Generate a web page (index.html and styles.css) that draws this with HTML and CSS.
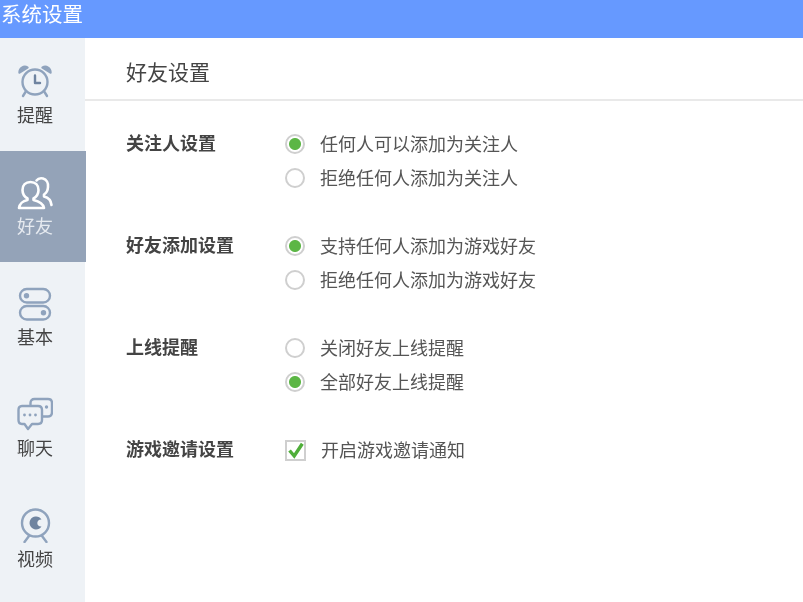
FILE: index.html
```html
<!DOCTYPE html>
<html lang="zh-CN">
<head>
<meta charset="utf-8">
<title>系统设置</title>
<link rel="stylesheet" href="styles.css">
</head>
<body>
<div class="app">
  <header class="titlebar">系统设置</header>
  <div class="main">
    <nav class="sidebar">
      <div class="nav-item">
        <svg class="nav-icon" viewBox="0 0 36 36" fill="none" stroke="#8fa3bd" stroke-width="2.4" stroke-linecap="round" stroke-linejoin="round">
          <circle cx="18" cy="19" r="12.5"/>
          <path d="M18 12.500V20H23" stroke="#6f84a0"/>
          <path d="M2.500 9.500C2.500 5.500 6.500 2.500 10.500 4.500Z" fill="#8fa3bd"/>
          <path d="M33.500 9.500C33.500 5.500 29.500 2.500 25.500 4.500Z" fill="#8fa3bd"/>
          <path d="M8.500 29l-2.500 4M27.500 29l2.500 4"/>
        </svg>
        <span>提醒</span>
      </div>
      <div class="nav-item active">
        <svg class="nav-icon" viewBox="0 0 36 36" fill="none" stroke="#fff" stroke-width="2.600" stroke-linecap="round" stroke-linejoin="round">
          <path d="M10.500 24.500C7 22.500 5.500 19.500 5.500 16C5.500 11 8.500 8 13.500 8C18.500 8 21.500 11 21.500 16C21.500 19.500 20 22.500 16.500 24.500V26C21 27 26 28.500 27 34H2C3 28.500 6 27 10.500 26Z"/>
          <path d="M19.500 6.500C21 4.500 23.500 4 26 4.500C29.500 5.500 31.500 9 31 13C30.800 16.500 29.500 19 27 20.500V22.500C31 23.500 34 26 34.500 31"/>
        </svg>
        <span>好友</span>
      </div>
      <div class="nav-item">
        <svg class="nav-icon" viewBox="0 0 36 36" fill="none" stroke="#8fa3bd" stroke-width="2.400">
          <rect x="3" y="4" width="30" height="13.500" rx="6.750"/>
          <rect x="3" y="21" width="30" height="13.500" rx="6.750"/>
          <circle cx="9.500" cy="10.700" r="2.700" fill="#8fa3bd" stroke="none"/>
          <circle cx="26.500" cy="27.700" r="2.700" fill="#8fa3bd" stroke="none"/>
        </svg>
        <span>基本</span>
      </div>
      <div class="nav-item">
        <svg class="nav-icon" viewBox="0 0 36 36" fill="none" stroke="#8fa3bd" stroke-width="2.400" stroke-linecap="round" stroke-linejoin="round">
          <path d="M5 10H21C23.500 10 25 11.500 25 14V24C25 26.500 23.500 28 21 28H15L11 33L7.500 28H5C2.500 28 1.500 26.500 1.500 24V14C1.500 11.500 2.500 10 5 10Z"/>
          <path d="M13.500 8.500V7C13.500 4.500 15 3 17.500 3H31C33.500 3 35 4.500 35 7V16C35 19 33.500 20.500 31 20.500H26"/>
          <circle cx="7.500" cy="19" r="1.400" fill="#8fa3bd" stroke="none"/>
          <circle cx="13" cy="19" r="1.400" fill="#8fa3bd" stroke="none"/>
          <circle cx="18.500" cy="19" r="1.400" fill="#8fa3bd" stroke="none"/>
          <circle cx="29.500" cy="11" r="1.700" fill="#8fa3bd" stroke="none"/>
        </svg>
        <span>聊天</span>
      </div>
      <div class="nav-item">
        <svg class="nav-icon" viewBox="0 0 36 36" fill="none" stroke="#8fa3bd" stroke-width="2.400" stroke-linecap="round">
          <circle cx="18.500" cy="16" r="13.500"/>
          <path d="M18.500 9.500A6.500 6.500 0 1 0 24.500 19.500C22 19.700 20.300 18.200 20.300 16C20.300 14 22 12.300 24.500 12.500A6.500 6.500 0 0 0 18.500 9.500Z" fill="#6f84a0" stroke="none"/>
          <path d="M12 29L7.500 35M25 29L29.500 35"/>
        </svg>
        <span>视频</span>
      </div>
    </nav>
    <section class="content">
      <h1 class="content-title">好友设置</h1>
      <div class="groups">
        <div class="group">
          <div class="group-label">关注人设置</div>
          <div class="options">
            <div class="option"><i class="radio checked"></i><span>任何人可以添加为关注人</span></div>
            <div class="option"><i class="radio"></i><span>拒绝任何人添加为关注人</span></div>
          </div>
        </div>
        <div class="group">
          <div class="group-label">好友添加设置</div>
          <div class="options">
            <div class="option"><i class="radio checked"></i><span>支持任何人添加为游戏好友</span></div>
            <div class="option"><i class="radio"></i><span>拒绝任何人添加为游戏好友</span></div>
          </div>
        </div>
        <div class="group">
          <div class="group-label">上线提醒</div>
          <div class="options">
            <div class="option"><i class="radio"></i><span>关闭好友上线提醒</span></div>
            <div class="option"><i class="radio checked"></i><span>全部好友上线提醒</span></div>
          </div>
        </div>
        <div class="group">
          <div class="group-label">游戏邀请设置</div>
          <div class="options">
            <div class="option">
              <i class="checkbox"><svg viewBox="0 0 20 20" fill="none" stroke="#4fae3a" stroke-width="4"><path d="M3 10L8.500 16.500L18 2"/></svg></i>
              <span>开启游戏邀请通知</span>
            </div>
          </div>
        </div>
      </div>
    </section>
  </div>
</div>
</body>
</html>
```
FILE: styles.css
```css
* { box-sizing: border-box; }
html, body { margin: 0; padding: 0; }
body {
  width: 803px;
  height: 602px;
  overflow: hidden;
  background: #fff;
  font-family: "Noto Sans CJK SC", "Liberation Sans", sans-serif;
  color: #555;
}
.app {
  height: 602px;
  display: flex;
  flex-direction: column;
  filter: blur(0.5px);
}
.titlebar {
  height: 38px;
  flex: none;
  padding-left: 1px;
  background: #6699ff;
  color: #fff;
  font-size: 20.500px;
  line-height: 27px;
}
.main { flex: 1; display: flex; min-height: 0; }
.sidebar {
  width: 85px;
  flex: none;
  padding-top: 2px;
  background: #eef2f6;
}
.nav-item {
  width: 85px;
  height: 111px;
  display: flex;
  flex-direction: column;
  align-items: center;
  padding: 23px 15px 0 0;
  font-size: 18px;
  line-height: 24px;
  color: #444;
}
.nav-item.active {
  width: 86px;
  padding-right: 16px;
  background: #94a3b8;
  color: #e6eaf0;
}
.nav-icon { width: 36px; height: 36px; display: block; margin-bottom: 3px; flex: none; }
.content { flex: 1; min-width: 0; }
.content-title {
  margin: 0;
  height: 63px;
  padding: 16px 0 0 41px;
  border-bottom: 2px solid #e9e9e9;
  font-size: 21px;
  line-height: 34px;
  font-weight: 400;
  color: #444;
}
.groups { padding: 26px 0 0 41px; }
.group { display: flex; margin-bottom: 34px; }
.group-label {
  width: 159px;
  flex: none;
  font-size: 18px;
  line-height: 30px;
  font-weight: 700;
  color: #444;
}
.option {
  display: flex;
  align-items: center;
  height: 34px;
  font-size: 18px;
  color: #555;
}
.option span { margin-bottom: 2px; }
.radio {
  width: 20px;
  height: 20px;
  margin-right: 15px;
  flex: none;
  border: 2px solid #cfcfcf;
  border-radius: 50%;
  background: #fff;
}
.radio.checked {
  background: radial-gradient(circle, #5cb645 0 5.500px, #fff 6.500px);
}
.checkbox {
  width: 21px;
  height: 21px;
  margin-right: 15px;
  flex: none;
  border: 2px solid #cfcfcf;
  background: #fff;
  display: block;
}
.checkbox svg { display: block; width: 17px; height: 17px; }
```
